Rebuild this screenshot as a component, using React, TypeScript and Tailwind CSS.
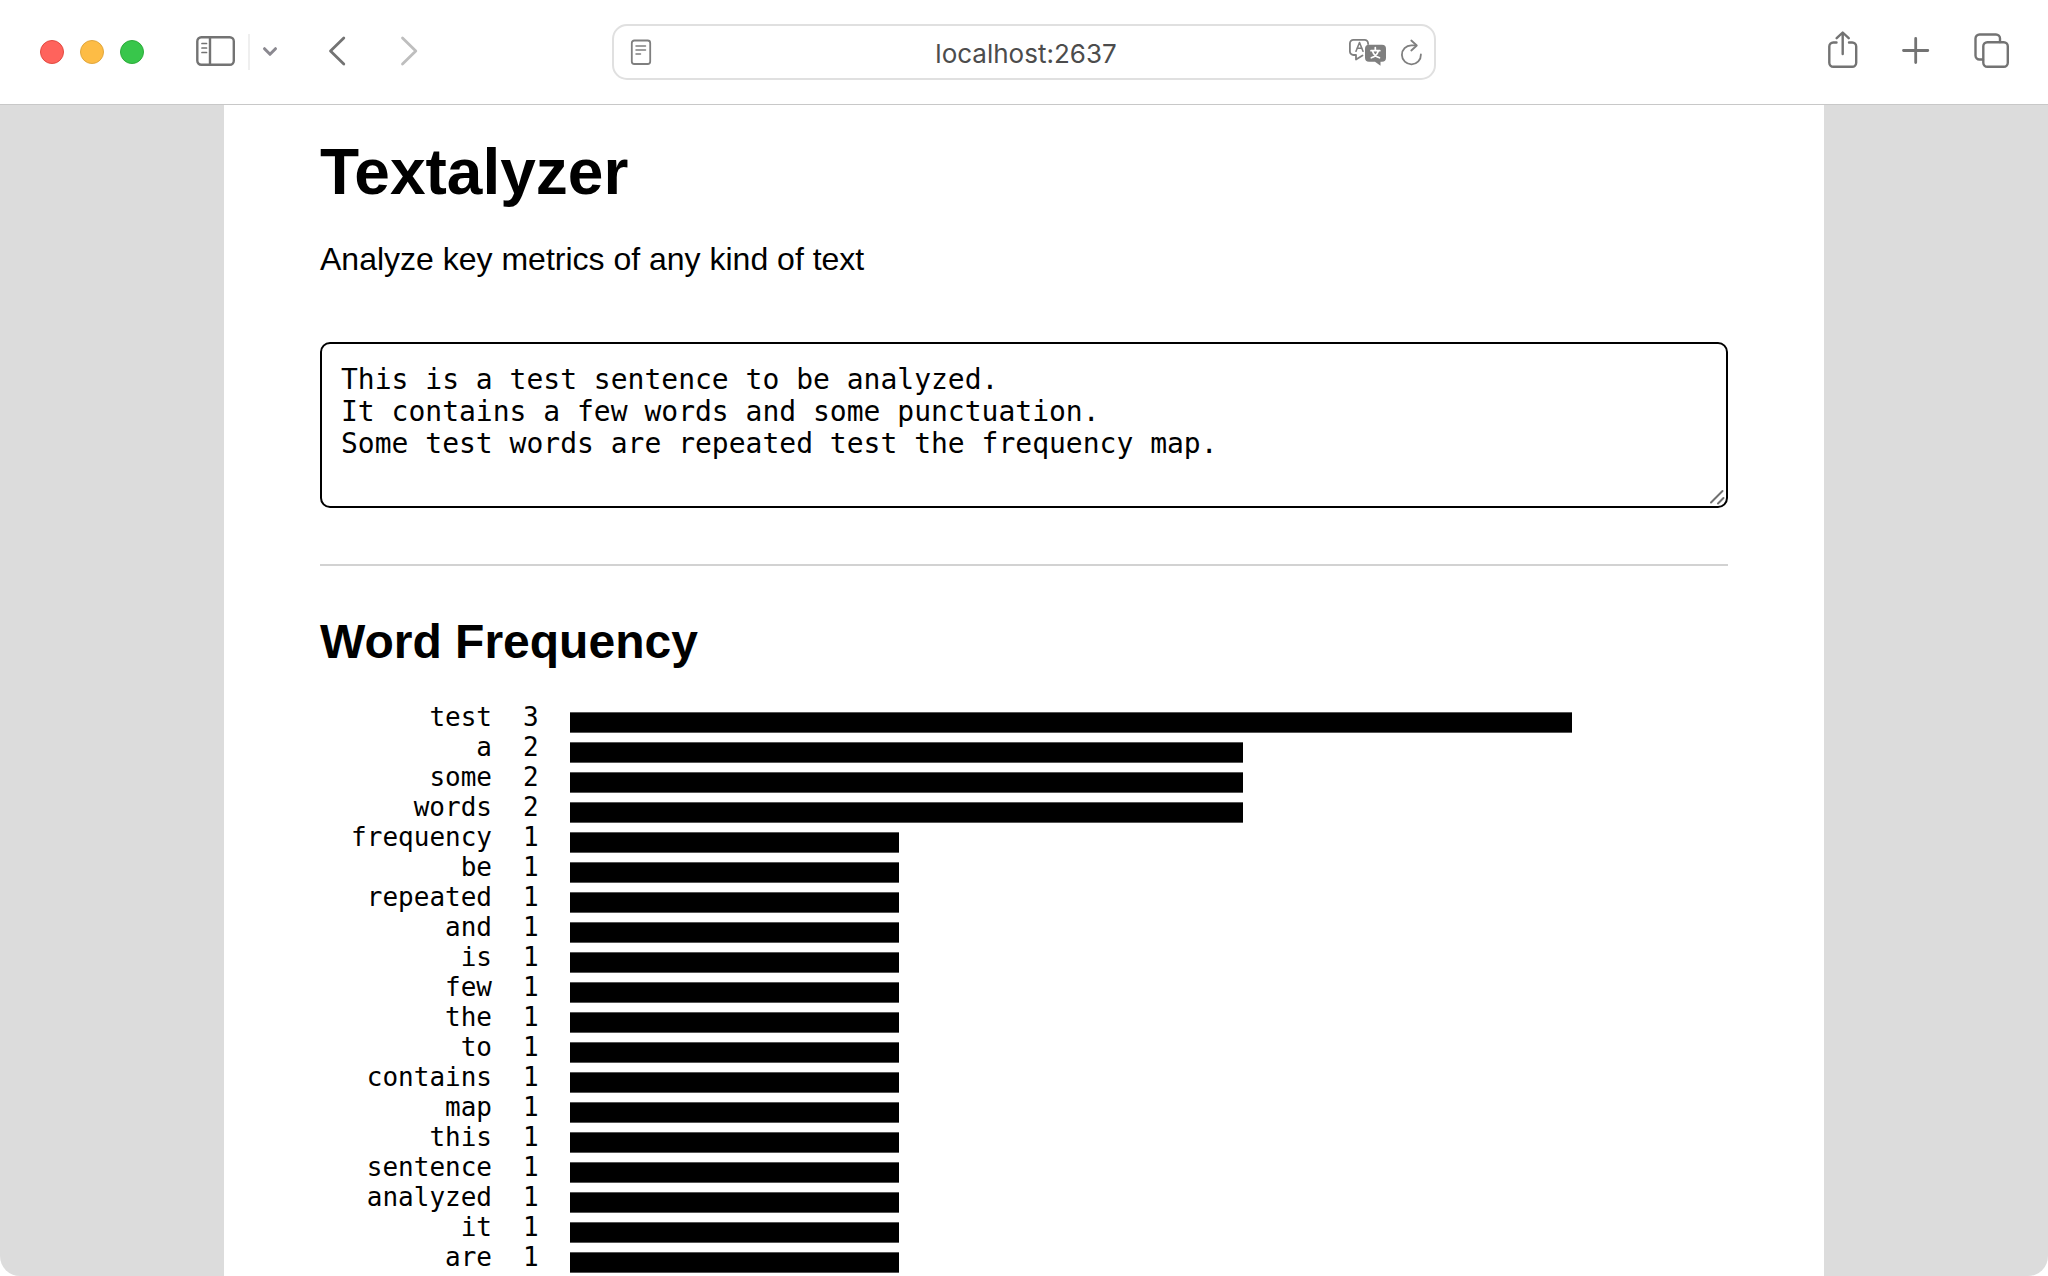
import React, { useState } from "react";

const INITIAL_TEXT = `This is a test sentence to be analyzed.
It contains a few words and some punctuation.
Some test words are repeated test the frequency map.
`;

// Bar length in characters for each count.
const BAR_LENGTH: Record<number, number> = { 1: 21, 2: 43, 3: 64 };

const FREQUENCIES: [string, number][] = [
  ["test", 3],
  ["a", 2],
  ["some", 2],
  ["words", 2],
  ["frequency", 1],
  ["be", 1],
  ["repeated", 1],
  ["and", 1],
  ["is", 1],
  ["few", 1],
  ["the", 1],
  ["to", 1],
  ["contains", 1],
  ["map", 1],
  ["this", 1],
  ["sentence", 1],
  ["analyzed", 1],
  ["it", 1],
  ["are", 1],
];

function Icon({ className, viewBox, children }: { className: string; viewBox: string; children: React.ReactNode }) {
  return (
    <svg
      aria-hidden="true"
      className={className}
      viewBox={viewBox}
      fill="none"
      stroke="currentColor"
      strokeWidth="2.4"
      strokeLinecap="round"
      strokeLinejoin="round"
    >
      {children}
    </svg>
  );
}

function Toolbar() {
  return (
    <header className="flex h-[105px] items-center border-b border-[#c8c8c8] bg-white px-[38px] text-[#737373]">
      <div className="flex flex-1 items-center">
        <div className="flex gap-4 pl-0.5">
          <button aria-label="Close" className="size-6 rounded-full border border-[#e24b41] bg-[#ff635c]" />
          <button aria-label="Minimize" className="size-6 rounded-full border border-[#e1a73e] bg-[#fdbc45]" />
          <button aria-label="Zoom" className="size-6 rounded-full border border-[#2dac3a] bg-[#38c64b]" />
        </div>
        <button aria-label="Show sidebar" className="ml-[52px]">
          <Icon className="h-8 w-10" viewBox="0 0 40 32">
            <rect x="1.3" y="1.3" width="36.5" height="27.5" rx="4" />
            <path d="M14 1.5v27" />
            <path d="M6 7.5h4.5M6 12h4.5M6 16.5h4.5" strokeWidth="1.7" />
          </Icon>
        </button>
        <span className="ml-3 h-9 w-[2px] bg-[#efefef]" />
        <button aria-label="Tab groups" className="ml-3 text-[#8b8990]">
          <Icon className="h-4 w-4" viewBox="0 0 16 16">
            <path d="M2.5 4.7 8 10.3l5.5-5.6" strokeWidth="3" />
          </Icon>
        </button>
        <button aria-label="Back" className="ml-12">
          <Icon className="h-8 w-6" viewBox="0 0 24 32">
            <path d="M17.8 2 4.5 15l13.3 13" strokeWidth="2.8" />
          </Icon>
        </button>
        <button aria-label="Forward" className="ml-12 text-[#bebebe]">
          <Icon className="h-8 w-6" viewBox="0 0 24 32">
            <path d="M4.5 2 17.8 15 4.5 28" strokeWidth="2.8" />
          </Icon>
        </button>
      </div>

      <div className="flex h-14 w-[824px] items-center rounded-[15px] border-2 border-[#e0e0e0] px-[10px] text-[#7f7f7f]">
        <button aria-label="Reader view" className="ml-1">
          <Icon className="h-7 w-6" viewBox="0 0 24 28">
            <rect x="3.8" y="2.5" width="18.4" height="23.5" rx="2.5" strokeWidth="1.8" />
            <path d="M8 8h9.5M8 12h9.5M8 16h4.5" strokeWidth="1.5" />
          </Icon>
        </button>
        <input
          aria-label="Address"
          defaultValue="localhost:2637"
          className="ml-13 min-w-0 flex-1 bg-transparent pt-0.5 text-center font-['Inter',sans-serif] text-[26px] text-[#4c4c4c] outline-none"
        />
        <button aria-label="Translate page">
          <svg
            aria-hidden="true"
            className="h-7 w-[38px]"
            viewBox="0 0 38 28"
            fill="none"
            stroke="currentColor"
            strokeLinejoin="round"
            strokeLinecap="round"
          >
            <path
              d="M14.5 17.5 8 21.5V17H5.4a3.5 3.5 0 0 1-3.5-3.5V5.4a3.5 3.5 0 0 1 3.5-3.5h11.2a3.5 3.5 0 0 1 3.5 3.5V6"
              strokeWidth="1.8"
            />
            <path d="M8 13.2 11.5 4.5 15 13.2M9 10.3h5" strokeWidth="1.6" />
            <path
              d="M21 6.7h13a4 4 0 0 1 4 4v9a4 4 0 0 1-4 4h-1.5v4L27 23.7h-6a4 4 0 0 1-4-4v-9a4 4 0 0 1 4-4Z"
              fill="currentColor"
              stroke="none"
            />
            <path
              d="M27.3 9.5v2.5M23 12.7h8.8M24.5 13c1 3.3 3.2 5.6 7 6.8M30.3 13c-1 3.3-3.2 5.6-7 6.8"
              stroke="#fff"
              strokeWidth="1.7"
            />
          </svg>
        </button>
        <button aria-label="Reload" className="ml-[14px]">
          <Icon className="h-7 w-6" viewBox="0 0 24 28">
            <path d="M16 7.3H11.3A9.5 9.5 0 1 0 20.9 16.5" strokeWidth="1.8" />
            <path d="M11.3 2.5l5.5 5-5.5 5" strokeWidth="1.8" />
          </Icon>
        </button>
      </div>

      <div className="flex flex-1 items-center justify-end gap-[42px] pb-0.5">
        <button aria-label="Share">
          <Icon className="h-10 w-8" viewBox="0 0 32 40">
            <path d="M10.5 11.5H7.3a4 4 0 0 0-4 4v16.3a4 4 0 0 0 4 4h18.9a4 4 0 0 0 4-4V15.5a4 4 0 0 0-4-4h-3.2" />
            <path d="M16.7 23V2M10.7 7.2 16.7 1.5l6 5.7" />
          </Icon>
        </button>
        <button aria-label="New tab">
          <Icon className="size-8" viewBox="0 0 32 32">
            <path d="M15.7 3.5v24M3.5 15.5h24.3" strokeWidth="2.8" />
          </Icon>
        </button>
        <button aria-label="Tab overview">
          <Icon className="size-9" viewBox="0 0 36 36">
            <path d="M9 26.5H5.5a4 4 0 0 1-4-4V5.5a4 4 0 0 1 4-4H22a4 4 0 0 1 4 4V9" />
            <rect x="9.3" y="9.3" width="24.5" height="24.5" rx="4" />
          </Icon>
        </button>
      </div>
    </header>
  );
}

function FrequencyTable() {
  return (
    <table
      aria-labelledby="frequency-title"
      className="mt-8 font-['DejaVu_Sans_Mono',monospace] text-[26px] leading-[30px]"
    >
      <tbody>
        {FREQUENCIES.map(([word, count]) => (
          <tr key={word}>
            <th scope="row" className="w-[172px] p-0 text-right font-normal">
              {word}
            </th>
            <td className="w-[78px] p-0 pl-[31px]">{count}</td>
            <td className="p-0">
              <div
                className="mt-[10px] -mb-px h-[21px] border-y border-[#555] bg-black"
                style={{ width: `${BAR_LENGTH[count]}ch` }}
              />
            </td>
          </tr>
        ))}
      </tbody>
    </table>
  );
}

export default function App() {
  const [text, setText] = useState(INITIAL_TEXT);

  return (
    <div className="bg-white">
      <div className="flex min-h-screen flex-col overflow-hidden rounded-b-[20px] bg-[#dcdcdc] font-['Liberation_Sans',Arial,sans-serif] text-black">
        <Toolbar />
        <main className="mx-auto w-full max-w-[1600px] flex-1 bg-white px-24 pt-[31px]">
          <h1 className="text-[64px] leading-[72px] font-bold">Textalyzer</h1>
          <p className="mt-[33px] text-[32px] leading-9">Analyze key metrics of any kind of text</p>
          <div className="relative mt-[65px]">
            <textarea
              aria-label="Text to analyze"
              value={text}
              onChange={(event) => setText(event.target.value)}
              className="block h-[166px] w-full resize-y rounded-[10px] border-2 border-black px-[19px] pt-5 pb-4 font-['DejaVu_Sans_Mono',monospace] text-[28px] leading-8 outline-none [&::-webkit-resizer]:bg-transparent"
            />
            <svg
              aria-hidden="true"
              className="pointer-events-none absolute right-0.5 bottom-0.5 size-[18px]"
              viewBox="0 0 18 18"
              fill="none"
              stroke="#707070"
              strokeWidth="2"
              strokeLinecap="round"
            >
              <path d="M3 14.5 14.5 3M10 15.5l5.5-5.5" />
            </svg>
          </div>
          <hr className="mt-14 border-t-2 border-[#d2d2d2]" />
          <h2 id="frequency-title" className="mt-12 text-[48px] leading-[56px] font-bold">
            Word Frequency
          </h2>
          <FrequencyTable />
        </main>
      </div>
    </div>
  );
}
